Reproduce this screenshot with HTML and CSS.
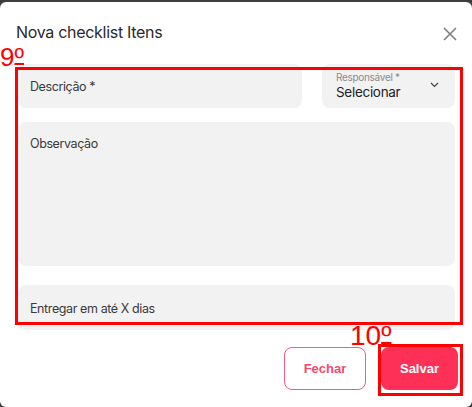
FILE: index.html
```html
<!DOCTYPE html>
<html lang="pt">
<head>
<meta charset="utf-8">
<link rel="stylesheet" href="styles.css">
</head>
<body>
<div class="modal">
  <div class="header">
    <h1 class="title">Nova checklist Itens</h1>
    <svg class="close" width="14" height="14" viewBox="0 0 14 14"><path d="M1 1L13 13M13 1L1 13" stroke="#7a7a7a" stroke-width="1.5" fill="none"/></svg>
  </div>
  <div class="fields">
    <div class="row">
      <div class="field desc">Descrição *</div>
      <div class="field select">
        <div class="select-text">
          <span class="small-label">Responsável *</span>
          <span class="value">Selecionar</span>
        </div>
        <svg class="chev" width="9" height="6" viewBox="0 0 9 6"><path d="M1 1L4.5 4.5L8 1" stroke="#444" stroke-width="1.2" fill="none"/></svg>
      </div>
    </div>
    <div class="field obs">Observação</div>
    <div class="field days">Entregar em até X dias</div>
  </div>
  <div class="footer">
    <button class="btn btn-outline">Fechar</button>
    <button class="btn btn-fill">Salvar</button>
  </div>
  <div class="mark mark-9">9<span class="ord">º</span></div>
  <div class="box box-fields"></div>
  <div class="mark mark-10">10<span class="ord">º</span></div>
  <div class="box box-save"></div>
</div>
</body>
</html>
```
FILE: styles.css
```css
html, body {
  margin: 0;
  padding: 0;
  background: #3e3e3e;
  width: 472px;
  height: 407px;
  overflow: hidden;
}
.modal {
  position: relative;
  margin-top: 2px;
  height: 405px;
  background: #ffffff;
  border-radius: 6px;
  padding: 0 14px 0 18px;
  box-sizing: border-box;
  font-family: Inter, "Noto Sans", sans-serif;
  color: #333;
}
.header {
  display: flex;
  justify-content: space-between;
  align-items: center;
  height: 62px;
  margin-left: -2px;
}
.title {
  margin: 0;
  font-size: 16px;
  font-weight: 400;
  color: #2a2a2a;
  letter-spacing: -0.3px;
  padding-bottom: 2px;
}
.close {
  margin-right: 1px;
  margin-top: 2px;
}
.fields {
  display: flex;
  flex-direction: column;
  margin-right: 3px;
}
.row {
  display: flex;
  gap: 20px;
}
.field {
  background: #f2f2f2;
  border-radius: 8px;
  box-sizing: border-box;
  font-size: 12.5px;
  color: #3a3a3a;
  padding: 0 12px;
  letter-spacing: -0.4px;
}
.desc {
  width: 284px;
  height: 44px;
  display: flex;
  align-items: center;
}
.select {
  flex: 1;
  height: 44px;
  display: flex;
  align-items: center;
  justify-content: space-between;
  padding: 0 16px 0 14px;
}
.select-text {
  display: flex;
  flex-direction: column;
  margin-top: -1px;
}
.small-label {
  font-size: 10px;
  color: #8a8a8a;
  line-height: 12px;
  letter-spacing: -0.3px;
}
.value {
  font-size: 13.5px;
  color: #222;
  line-height: 18px;
  letter-spacing: -0.3px;
}
.chev {
  margin-top: -3px;
}
.obs {
  margin-top: 14px;
  height: 144px;
  padding-top: 14px;
}
.days {
  margin-top: 19px;
  height: 45px;
  display: flex;
  align-items: center;
  padding-top: 1px;
}
.footer {
  display: flex;
  justify-content: flex-end;
  gap: 15px;
  margin-top: 17px;
}
.btn {
  height: 43px;
  border-radius: 8px;
  font-family: "Liberation Sans", Arial, sans-serif;
  font-weight: 700;
  font-size: 13px;
  box-sizing: border-box;
}
.btn-outline {
  width: 82px;
  background: #fff;
  border: 1px solid #f0607e;
  color: #f24a6e;
}
.btn-fill {
  width: 77px;
  background: #fe3058;
  border: none;
  color: #fff;
}
.mark {
  position: absolute;
  font-family: "Liberation Sans", Arial, sans-serif;
  color: #ff0000;
  line-height: 1;
}
.ord {
  text-decoration: underline;
  text-decoration-thickness: 2px;
  text-underline-offset: -3px;
}
.mark-9 {
  left: 0;
  top: 42px;
  font-size: 26px;
}
.mark-10 {
  left: 350px;
  top: 320px;
  font-size: 28px;
}
.box {
  position: absolute;
  border: 3px solid #ff0000;
  box-sizing: border-box;
}
.box-fields {
  left: 15px;
  top: 65px;
  width: 448px;
  height: 258px;
}
.box-save {
  left: 378px;
  top: 342px;
  width: 85px;
  height: 52px;
}
```
